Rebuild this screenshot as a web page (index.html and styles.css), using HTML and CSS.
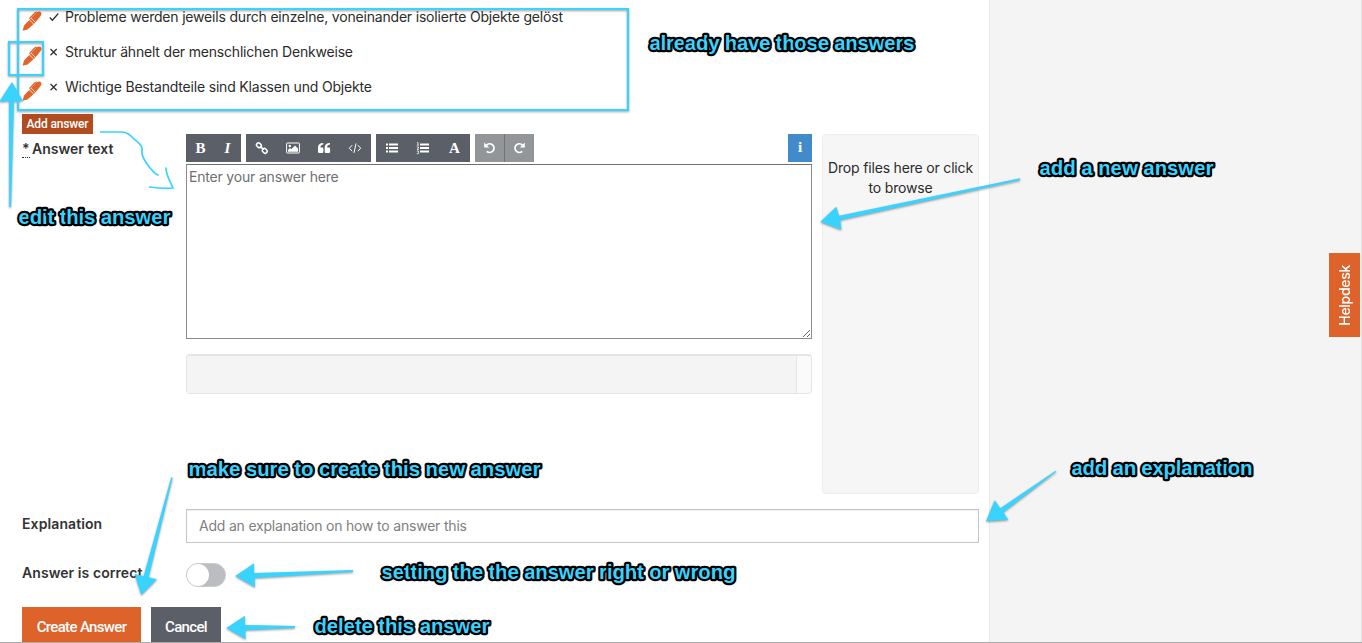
FILE: index.html
```html
<!DOCTYPE html>
<html lang="en">
<head>
<meta charset="utf-8">
<title>Answers</title>
<link rel="stylesheet" href="styles.css">
</head>
<body>
<svg class="defs" aria-hidden="true">
  <symbol id="pen" viewBox="0 0 20 20">
    <path d="M.6 19.800 2 14.600l5.200-5.700 4.300 4.300-6 5.300z"/>
    <path d="M7.600 8.500 8.800 7.200l4.400 4.400-1.300 1.300z"/>
    <path d="M9.200 6.800 14.600 1.600c1.500-1.400 3-1.500 4.100-.5 1.100 1.100 1 2.700-.3 4.100l-4.800 6z"/>
    <path d="M6.900 7.200 12.600 1.300l2-.8.500.5-7.300 7z"/>
  </symbol>
</svg>
<div class="page">
  <main class="panel">
    <ul class="answers">
      <li class="answer"><svg class="pen"><use href="#pen"/></svg><svg class="mark" viewBox="0 0 10 10"><path d="M.8 5.500 3.400 8.200 9.300 1.500"/></svg><span>Probleme werden jeweils durch einzelne, voneinander isolierte Objekte gelöst</span></li>
      <li class="answer"><svg class="pen"><use href="#pen"/></svg><svg class="mark" viewBox="0 0 10 10"><path d="M1.500 2 7.700 8.200M7.700 2 1.500 8.200"/></svg><span>Struktur ähnelt der menschlichen Denkweise</span></li>
      <li class="answer"><svg class="pen"><use href="#pen"/></svg><svg class="mark" viewBox="0 0 10 10"><path d="M1.500 2 7.700 8.200M7.700 2 1.500 8.200"/></svg><span>Wichtige Bestandteile sind Klassen und Objekte</span></li>
    </ul>
    <div class="add-row"><button class="add">Add answer</button></div>
    <div class="row editor-row">
      <label class="label"><span class="req">*</span> Answer text</label>
      <div class="editor">
        <div class="toolbar">
          <div class="group g1"><b class="glyph">B</b><i class="glyph">I</i></div>
          <div class="group g2">
            <svg viewBox="0 0 14 14"><g fill="none" stroke="#fff" stroke-width="1.500"><rect x="1.600" y="2.400" width="5" height="3.900" rx="1.800" transform="rotate(45 4.100 4.100)"/><rect x="7.300" y="7.900" width="5" height="3.900" rx="1.800" transform="rotate(45 9.800 9.800)"/><path d="m5.400 5.400 3.200 3.200"/></g></svg>
            <svg viewBox="0 0 14 14"><rect x=".6" y="2" width="12.800" height="10" rx=".7" fill="none" stroke="#fff"/><circle cx="3.800" cy="5" r="1.200"/><path d="M2 10.700V9l2-2 1.300 1.300L9 4.600l3 3v3.100z"/></svg>
            <svg viewBox="0 0 14 14"><path d="M6.300 2v1.400C4.700 3.500 3.500 4.500 3.500 6v.5h1.600q1.300 0 1.300 1.300v2.900q0 1.300-1.300 1.300H2.300Q1 12 1 10.700V6.500Q1 2 6.300 2zM13 2v1.400c-1.600.1-2.800 1.100-2.800 2.600v.5h1.600q1.300 0 1.300 1.300v2.900q0 1.300-1.300 1.300H9q-1.300 0-1.300-1.300V6.500Q7.700 2 13 2z"/></svg>
            <svg viewBox="0 0 14 14"><path d="M4.200 4.200 1.300 7.200l2.900 3M9.800 4.200l2.900 3-2.900 3M8 2.500 6 11.900" fill="none" stroke="#fff"/></svg>
          </div>
          <div class="group g3">
            <svg viewBox="0 0 14 14"><path d="M1 2.500h2v2H1zM1 6h2v2H1zM1 9.500h2v2H1zM4 2.500h9v2H4zM4 6h9v2H4zM4 9.500h9v2H4z"/></svg>
            <svg viewBox="0 0 14 14"><path d="M4 2.500h9v2H4zM4 6h9v2H4zM4 9.500h9v2H4z"/><path d="M1 1.500h1V4M.8 4.200h2M.8 6h1.700v1L1 8.300h2M.8 10h1.800L2 11.200q1.200.2.300 1.400L.8 12.800" fill="none" stroke="#fff" stroke-width=".8"/></svg>
            <b class="glyph">A</b>
          </div>
          <div class="group g4">
            <svg viewBox="0 0 14 14"><path d="M3.500 4.200A4.300 4.300 0 1 1 3.800 10.300" fill="none" stroke="#fff" stroke-width="1.800"/><path d="M1.200 1.500v5h5z"/></svg>
            <svg viewBox="0 0 14 14"><path d="M10.500 4.200A4.300 4.300 0 1 0 10.200 10.300" fill="none" stroke="#fff" stroke-width="1.800"/><path d="M12.800 1.500v5h-5z"/></svg>
          </div>
          <div class="info glyph">i</div>
        </div>
        <textarea class="text" placeholder="Enter your answer here"></textarea>
        <div class="preview"><div class="preview-body"></div></div>
      </div>
      <div class="drop">Drop files here or click<br>to browse</div>
    </div>
    <div class="row explain-row">
      <label class="label">Explanation</label>
      <input class="input" placeholder="Add an explanation on how to answer this">
    </div>
    <div class="row toggle-row">
      <label class="label">Answer is correct</label>
      <span class="toggle"><span class="knob"></span></span>
    </div>
    <div class="actions"><button class="btn create">Create Answer</button><button class="btn cancel">Cancel</button></div>
  </main>
  <aside class="side"><div class="help"><span>Helpdesk</span></div></aside>
</div>
<svg class="notes" viewBox="0 0 1362 643">
  <g class="shapes">
    <rect class="frame" x="18" y="9" width="610" height="101"/>
    <rect class="frame" x="9" y="42" width="34" height="33"/>
    <path d="M12 82-1 102l10-1 .2 106h1.800L14 101.500l9-.5z"/>
    <path d="M820.300 221.700l16-15 2.700 9L1020 178.300v2L840.300 220l1 9.700z"/>
    <path d="M986 521.300l8.700-21 5.600 8 55.400-37.600.6 1-53 40.500 5 7.500z"/>
    <path d="M141.300 595l-6.600-21 9 2 27.600-98.700 1.400.2-24 99.800 8.300 2z"/>
    <path d="M235.300 576 254 563.300v9.700l99-3v2l-98.300 6 .3 9.300z"/>
    <path d="M226.300 628 245 615.700v9.300l50 1v2l-49.700 2.300.4 9z"/>
  </g>
  <path class="sketch" d="M100.700 132H122c5 0 8 3 12 7 4 3 7 5 8 9v6c1 5 5 10 8 14 3 3 5 6 8 7M166 168c0 7 4 13 7 20-8 1-16 0-23.500-1"/>
  <g class="captions">
    <text x="649.500" y="50" textLength="265">already have those answers</text>
    <text x="18.500" y="224" textLength="152">edit this answer</text>
    <text x="1039.500" y="175" textLength="174">add a new answer</text>
    <text x="188.500" y="476" textLength="352">make sure to create this new answer</text>
    <text x="1071.500" y="475" textLength="181">add an explanation</text>
    <text x="381.500" y="579" textLength="354">setting the the answer right or wrong</text>
    <text x="314.500" y="633" textLength="175">delete this answer</text>
  </g>
</svg>
</body>
</html>
```
FILE: styles.css
```css
* { box-sizing: border-box; }
body { margin: 0; height: 643px; overflow: hidden; font-family: Inter, "Liberation Sans", sans-serif; font-size: 14px; line-height: 20px; color: #2b2b2b; background: #fff; }
.defs { position: absolute; width: 0; height: 0; }
.page { display: flex; height: 643px; border-bottom: 1px solid #aaa; overflow: hidden; }
.panel { width: 989px; flex: none; padding: 0 10px 0 22px; }
.side { flex: 1; background: #f4f4f4; border-left: 1px solid #eaeaea; border-right: 1px solid #e0e0e0; display: flex; justify-content: flex-end; padding-top: 253px; }
.help { width: 31px; height: 84px; margin-right: 1px; background: #dd632b; color: #fff; display: flex; align-items: center; justify-content: center; font-size: 14px; font-weight: 500; }
.help span { writing-mode: vertical-rl; transform: rotate(180deg); letter-spacing: -.3px; }
.answers { list-style: none; margin: 0; padding: 7px 0 0; height: 114px; }
.answer { display: flex; height: 35px; white-space: nowrap; letter-spacing: -.19px; }
.pen { width: 20px; height: 20px; margin-top: 4px; fill: #e0652a; flex: none; }
.mark { width: 10px; height: 10px; margin: 5px 6px 0 7px; fill: none; stroke: #333; stroke-width: 1.300; flex: none; }
.add-row { height: 20px; display: flex; }
.add { width: 71px; height: 20px; padding: 0; border: 0; background: #b04c1f; color: #fff; font: 500 12px/20px Roboto, sans-serif; letter-spacing: -.15px; }
.row { display: flex; }
.label { width: 164px; flex: none; font-weight: 600; color: #333; }
.req { border-bottom: 1px dotted #333; margin-right: -1px; }
.editor-row { height: 360px; }
.editor-row .label { padding-top: 5px; }
.editor { width: 626px; }
.toolbar { display: flex; height: 28px; gap: 5px; }
.group { display: flex; align-items: center; justify-content: space-around; background: #5b5f67; color: #fff; }
.group svg { width: 14px; height: 14px; fill: #fff; }
.glyph { font-family: "Liberation Serif", serif; font-size: 15px; font-weight: bold; width: 14px; text-align: center; }
.g1 { width: 55px; padding-left: 1px; } .g2 { width: 125px; } .g3 { width: 94px; }
.g4 { width: 59px; background: linear-gradient(90deg, #929698 29px, #707477 29px, #707477 30px, #929698 30px); }
.info { margin-left: auto; width: 24px; background: #428bca; color: #fff; line-height: 27px; }
.text { display: block; width: 626px; height: 175px; margin: 2px 0 15px; padding: 2px; border: 1px solid #8b8b8b; border-top-color: #707070; font: inherit; letter-spacing: -.19px; resize: vertical; outline: 0; }
.text::placeholder { color: #6f6f6f; opacity: 1; }
.preview { height: 40px; border: 1px solid #e5e5e5; border-top-width: 2px; border-radius: 4px; background: #fafafa; padding-right: 14px; }
.preview-body { height: 37px; background: #f4f4f4; border-right: 1px solid #e5e5e5; }
.drop { width: 157px; margin-left: 10px; background: #f6f6f6; border: 1px solid #eee; border-radius: 4px; text-align: center; padding-top: 23px; white-space: nowrap; letter-spacing: -.18px; }
.explain-row { margin-top: 15px; height: 34px; }
.explain-row .label { padding-top: 5px; letter-spacing: .1px; }
.input { width: 793px; height: 34px; border: 1px solid #c5c5c5; box-shadow: inset 0 1px 1px #eee; padding: 0 12px 2px; font: inherit; letter-spacing: -.2px; outline: 0; }
.input::placeholder { color: #808080; opacity: 1; }
.toggle-row { margin-top: 20px; height: 24px; }
.toggle-row .label { letter-spacing: .07px; }
.toggle { width: 40px; height: 24px; border-radius: 12px; background: #bbbdc0; border: 1px solid #c9cacc; }
.knob { display: block; width: 22px; height: 22px; border-radius: 50%; background: #fff; }
.actions { display: flex; gap: 10px; margin-top: 20px; }
.btn { height: 40px; padding: 0; border: 0; color: #fff; font: 500 15px/40px Roboto, sans-serif; letter-spacing: -.65px; }
.create { width: 119px; background: #dd632b; }
.cancel { width: 70px; background: #5b5f67; }
.notes { position: absolute; left: 0; top: 0; width: 1362px; height: 643px; pointer-events: none; }
.shapes { fill: #38d3ff; filter: drop-shadow(0 1px 1px rgba(0,0,0,.4)); }
.frame { fill: none; stroke: #38d3ff; stroke-width: 2; }
.sketch { fill: none; stroke: #38d3ff; stroke-width: 1.700; stroke-linecap: round; stroke-linejoin: round; }
.captions { font: bold 20.5px "Liberation Sans", sans-serif; fill: #38d3ff; stroke: #000; stroke-width: 4.500px; stroke-linejoin: round; paint-order: stroke; }
```
